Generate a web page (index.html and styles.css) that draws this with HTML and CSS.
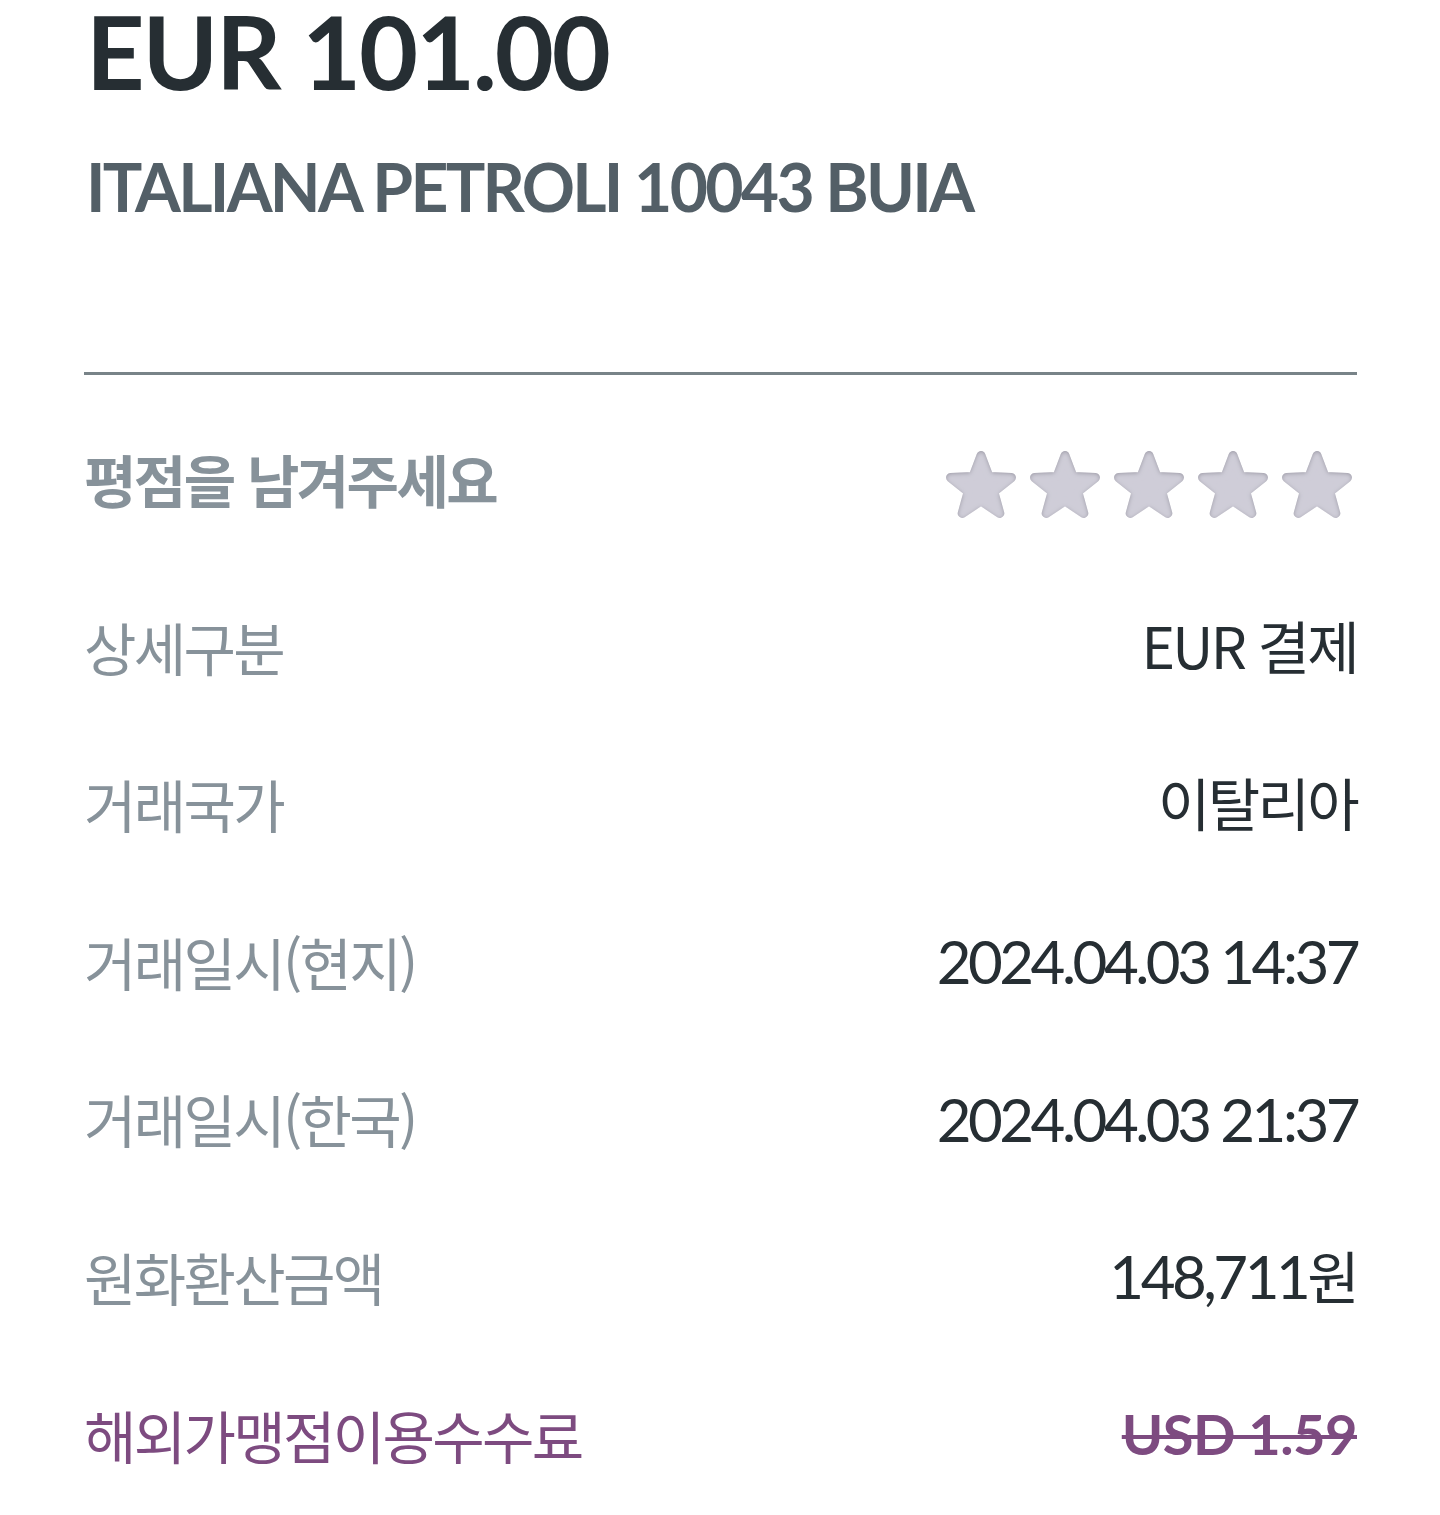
FILE: index.html
```html
<!DOCTYPE html>
<html lang="ko">
<head>
<meta charset="utf-8">
<title>EUR 101.00</title>
<link rel="stylesheet" href="styles.css">
</head>
<body>
<svg class="defs" width="0" height="0" aria-hidden="true">
  <defs>
    <filter id="inner" x="-20%" y="-20%" width="140%" height="140%">
      <feComponentTransfer in="SourceAlpha" result="inv">
        <feFuncA type="table" tableValues="1 0"/>
      </feComponentTransfer>
      <feGaussianBlur in="inv" stdDeviation="2.2" result="blur"/>
      <feOffset in="blur" dx="0" dy="1" result="off"/>
      <feFlood flood-color="#8f8d99" flood-opacity="0.85" result="col"/>
      <feComposite in="col" in2="off" operator="in" result="sh"/>
      <feComposite in="sh" in2="SourceAlpha" operator="in" result="shc"/>
      <feMerge>
        <feMergeNode in="SourceGraphic"/>
        <feMergeNode in="shc"/>
      </feMerge>
    </filter>
    <symbol id="star" viewBox="0 0 70 70">
      <g filter="url(#inner)">
        <polygon points="35,4.5 42.94,25.58 65.43,26.61 47.84,40.67 53.81,62.39 35,50 16.19,62.39 22.16,40.67 4.57,26.61 27.06,25.58" fill="#cfcdd8" stroke="#cfcdd8" stroke-width="9" stroke-linejoin="round"/>
      </g>
    </symbol>
  </defs>
</svg>
<main class="page">
  <header class="head">
    <h1 class="amount">EUR 101.00</h1>
    <h2 class="merchant">ITALIANA PETROLI 10043 BUIA</h2>
  </header>
  <hr class="divider">
  <section class="rating">
    <span class="rating-label">평점을 남겨주세요</span>
    <div class="stars">
      <svg class="star" viewBox="0 0 70 70"><use href="#star"/></svg>
      <svg class="star" viewBox="0 0 70 70"><use href="#star"/></svg>
      <svg class="star" viewBox="0 0 70 70"><use href="#star"/></svg>
      <svg class="star" viewBox="0 0 70 70"><use href="#star"/></svg>
      <svg class="star" viewBox="0 0 70 70"><use href="#star"/></svg>
    </div>
  </section>
  <dl class="details">
    <div class="row">
      <dt class="label">상세구분</dt>
      <dd class="value"><span class="ko">EUR 결제</span></dd>
    </div>
    <div class="row">
      <dt class="label">거래국가</dt>
      <dd class="value"><span class="ko">이탈리아</span></dd>
    </div>
    <div class="row">
      <dt class="label">거래일시(현지)</dt>
      <dd class="value">2024.04.03 14:37</dd>
    </div>
    <div class="row">
      <dt class="label">거래일시(한국)</dt>
      <dd class="value">2024.04.03 21:37</dd>
    </div>
    <div class="row">
      <dt class="label">원화환산금액</dt>
      <dd class="value">148,711<span class="ko">원</span></dd>
    </div>
    <div class="row">
      <dt class="label fee">해외가맹점이용수수료</dt>
      <dd class="value fee-value">USD 1.59</dd>
    </div>
  </dl>
</main>
</body>
</html>
```

FILE: styles.css
```css
html, body {
  margin: 0;
  padding: 0;
  background: #ffffff;
}

.defs {
  position: absolute;
  width: 0;
  height: 0;
  overflow: hidden;
}

.page {
  padding: 0 83px 0 84px;
  font-family: Lato, "Noto Sans CJK KR", sans-serif;
  color: #262e33;
}

.head {
  display: flex;
  flex-direction: column;
}

.amount {
  margin: 0;
  font-family: Lato, "Noto Sans CJK KR", sans-serif;
  font-weight: 700;
  font-size: 102px;
  line-height: 102px;
  letter-spacing: -2.2px;
  color: #262e33;
  padding-left: 2px;
}

.merchant {
  margin: 52px 0 0 0;
  font-family: Lato, "Noto Sans CJK KR", sans-serif;
  font-weight: 700;
  font-size: 66px;
  line-height: 66px;
  letter-spacing: -2.7px;
  color: #535f67;
  padding-left: 2px;
}

.divider {
  margin: 152px 0 0 0;
  border: 0;
  height: 3px;
  background: #788388;
}

.rating {
  height: 178px;
  padding-top: 14px;
  display: flex;
  align-items: center;
  justify-content: space-between;
}

.rating-label {
  font-family: "Noto Sans CJK KR", sans-serif;
  font-weight: 700;
  font-size: 57px;
  letter-spacing: -2.6px;
  color: #87929a;
  line-height: 1.2;
  white-space: nowrap;
}

.stars {
  display: flex;
  gap: 14px;
  margin-top: 16px;
  margin-right: 5px;
}

.star {
  width: 70px;
  height: 70px;
  display: block;
}

.details {
  margin: 0;
  padding: 0;
}

.row {
  height: 157.6px;
  display: flex;
  align-items: center;
  justify-content: space-between;
}

.label {
  margin: 0;
  font-family: "Noto Sans CJK KR", sans-serif;
  font-weight: 400;
  font-size: 57px;
  letter-spacing: -2.7px;
  line-height: 1.2;
  color: #87929a;
  white-space: nowrap;
}

.value {
  margin: 0;
  font-family: Lato, "Noto Sans CJK KR", sans-serif;
  font-weight: 400;
  font-size: 60px;
  letter-spacing: -3.5px;
  line-height: 1.2;
  color: #262e33;
  text-align: right;
  white-space: nowrap;
  flex-shrink: 0;
}

.value .ko {
  font-family: "Noto Sans CJK KR", sans-serif;
  font-size: 57px;
  letter-spacing: -2.7px;
}

.fee {
  color: #7d4b80;
}

.fee-value {
  font-weight: 700;
  font-size: 56px;
  letter-spacing: -0.5px;
  color: #7d4b80;
  text-decoration: line-through;
  text-decoration-thickness: 4px;
}
```
